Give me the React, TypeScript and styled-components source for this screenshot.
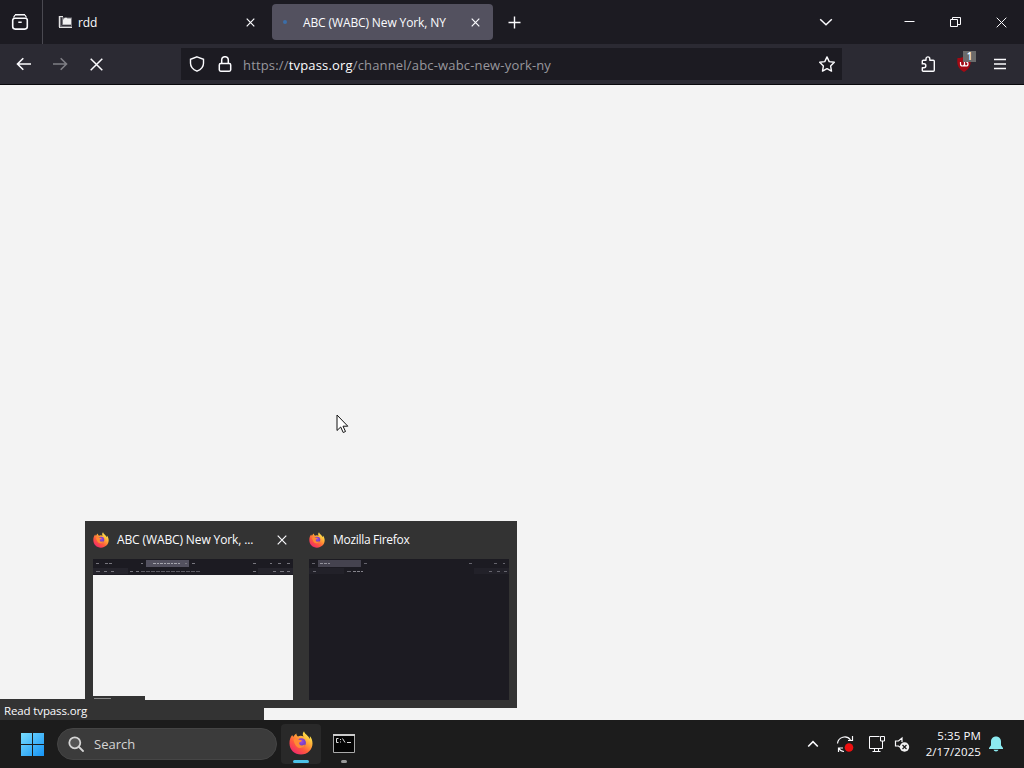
import React from 'react';
import styled, { createGlobalStyle } from 'styled-components';

const FirefoxLogo: React.FC<{ size: number; id: string }> = ({ size, id }) => (
  <Icon $size={size} viewBox="0 0 24 24">
    <defs>
      <linearGradient id={`${id}-body`} x1="0.85" y1="0.1" x2="0.2" y2="0.95">
        <stop offset="0" stopColor="#fff04f" />
        <stop offset="0.35" stopColor="#ffa436" />
        <stop offset="0.65" stopColor="#ff5a3c" />
        <stop offset="1" stopColor="#f0286c" />
      </linearGradient>
      <radialGradient id={`${id}-globe`} cx="0.5" cy="0.35" r="0.65">
        <stop offset="0" stopColor="#a24de0" />
        <stop offset="1" stopColor="#6038b8" />
      </radialGradient>
    </defs>
    <path
      fill={`url(#${id}-body)`}
      stroke="none"
      d="M15 .3c-1.600 1.800-1.500 3.800-.5 5.200C12.800 4.700 11 4.400 9 5.600 7.900 4.900 7.300 3.600 7.400 2.400 5.900 3.200 5 4.500 4.500 5.700 3.800 5.400 3.400 4.800 3.200 3.900 1.400 6 .4 9 .5 12.500.6 19 5.500 23.500 12 23.500S23.500 18.700 23.500 12.500c0-3-1-5.700-2.700-7.400.2 1 .2 2-.1 2.800C19.700 4.600 16 3.700 15 .3z"
    />
    <circle cx="12.300" cy="11.800" r="4.600" fill={`url(#${id}-globe)`} stroke="none" />
    <path
      fill="#ff8a35"
      stroke="none"
      d="M4.500 8.500c2.400-1.400 4.300-1 5.500.2 1.200.2 2.500.3 3 .8-.3 1.200-2 1.500-2.800 2.100-.4 2 1.200 3.100 3 2.800 1.300-.2 2-1 3-.6-1 2.400-3.300 3.500-5.600 3.200C7 16.500 5.500 13 4.500 8.500z"
    />
  </Icon>
);

const CloseIcon: React.FC<{ size: number; width?: number }> = ({ size, width = 1.2 }) => (
  <Icon $size={size} viewBox={`0 0 ${size} ${size}`} strokeWidth={width}>
    <path d={`M.7.7L${size - 0.7} ${size - 0.7}M${size - 0.7}.7L.7 ${size - 0.7}`} />
  </Icon>
);

const TabStrip: React.FC = () => (
  <TabBar>
    <ViewButton>
      <Icon $size={18} viewBox="0 0 18 18" strokeWidth="1.6">
        <path d="M4 1.800h10M3.700 5.300h10.600a2 2 0 0 1 2 2v6.300a2.500 2.500 0 0 1-2.500 2.500H4.200a2.500 2.500 0 0 1-2.500-2.500V7.300a2 2 0 0 1 2-2zM7.300 9.300h3.400" />
        <path d="M2.500 4.500L4 2M15.500 4.500L14 2" strokeWidth="1.200" />
      </Icon>
    </ViewButton>
    <Tab>
      <Icon $size={14} viewBox="0 0 14 14">
        <path fill="#77767c" stroke="none" d="M.5 1H5v1.500h9V12H.5z" />
        <path fill="#f2f2f2" stroke="none" d="M6 3.500l2-1 1.500 1H13v6H5V5z" />
        <path stroke="#e2e2e2" d="M1 1.500h4M1.500 1v12M1 12.500h13" />
        <path stroke="#34333b" d="M3.500 2.500v8M4 10.500h9" />
      </Icon>
      <TabLabel>rdd</TabLabel>
      <CloseIcon size={9} />
    </Tab>
    <Tab $active>
      <Spinner />
      <TabLabel>ABC (WABC) New York, NY</TabLabel>
      <CloseIcon size={9} />
    </Tab>
    <NewTab>
      <Icon $size={13} viewBox="0 0 13 13" strokeWidth="1.4">
        <path d="M6.500.5v12M.5 6.500h12" />
      </Icon>
    </NewTab>
    <Spacer />
    <BarButton $width={36}>
      <Icon $size={14} viewBox="0 0 14 14" strokeWidth="1.5">
        <path d="M1.200 4.200L7 9.700l5.800-5.500" />
      </Icon>
    </BarButton>
    <WindowControls>
      <BarButton $width={46}>
        <Icon $size={11} viewBox="0 0 11 11">
          <path d="M.5 4.500h10" />
        </Icon>
      </BarButton>
      <BarButton $width={46}>
        <Icon $size={11} viewBox="0 0 11 11">
          <path d="M.5 2.500h7v7h-7zM2.500 2V.5h8v7H8" />
        </Icon>
      </BarButton>
      <BarButton $width={46}>
        <CloseIcon size={11} width={1} />
      </BarButton>
    </WindowControls>
  </TabBar>
);

const NavToolbar: React.FC = () => (
  <NavBar>
    <BarButton $width={36}>
      <Icon $size={16} viewBox="0 0 16 16" strokeWidth="1.6">
        <path d="M15 8H1.500M7.300 2.200L1.500 8l5.800 5.800" />
      </Icon>
    </BarButton>
    <BarButton $width={36} $dim>
      <Icon $size={16} viewBox="0 0 16 16" strokeWidth="1.6">
        <path d="M1 8h13.500M8.700 2.200L14.500 8l-5.800 5.800" />
      </Icon>
    </BarButton>
    <BarButton $width={36}>
      <CloseIcon size={13} width={1.5} />
    </BarButton>
    <UrlBar>
      <Icon $size={16} viewBox="0 0 16 16" strokeWidth="1.4">
        <path d="M8 .8l6.500 2.500v3.900c0 3.500-2.500 6.300-6.500 8-4-1.700-6.500-4.500-6.500-8V3.300z" />
      </Icon>
      <Icon $size={16} viewBox="0 0 16 16" strokeWidth="1.5">
        <rect x="2.300" y="7.500" width="11.400" height="7.700" rx="1.400" />
        <path d="M4.700 7.500V4a3.300 3.300 0 0 1 6.600 0v3.500" />
      </Icon>
      <Url>
        https://<b>tvpass.org</b>/channel/abc-wabc-new-york-ny
      </Url>
      <Icon $size={16} viewBox="0 0 16 16" strokeWidth="1.4">
        <path
          strokeLinejoin="round"
          d="M8 .9l2.200 4.700 5.100.7-3.700 3.600.9 5.200L8 12.600l-4.500 2.500.9-5.200L.7 6.300l5.100-.7z"
        />
      </Icon>
    </UrlBar>
    <Spacer />
    <BarButton $width={36}>
      <Icon $size={16} viewBox="0 0 16 16" strokeWidth="1.4">
        <path
          strokeLinejoin="round"
          d="M2.300 7.500V5.300q0-1 1-1H6V2.800a1.900 1.900 0 0 1 3.800 0v1.500h3.500q1 0 1 1v9q0 1-1 1h-10q-1 0-1-1v-2.600h1.600a1.900 1.900 0 0 0 0-3.900H1.600"
        />
      </Icon>
    </BarButton>
    <BarButton $width={36}>
      <Extension>
        <Icon $size={16} viewBox="0 0 16 16">
          <path fill="#a30a14" stroke="none" d="M8 0c2 2 5 2 6.500 2 1 7-1 11-6.500 14C2.500 13 .5 9 1.500 2 4 2 6 2 8 0z" />
          <path stroke="#fff" strokeWidth="1.2" d="M4.500 6v2q0 2 2 2t2-2V6M8.500 8q0 2 1.500 2 2 0 2-2T10 6" />
        </Icon>
        <Badge>1</Badge>
      </Extension>
    </BarButton>
    <BarButton $width={36}>
      <Icon $size={14} viewBox="0 0 14 14" strokeWidth="1.4">
        <path d="M1 2.500h12M1 7h12M1 11.500h12" />
      </Icon>
    </BarButton>
  </NavBar>
);

const TaskPreviews: React.FC = () => (
  <PreviewPanel>
    <Preview>
      <PreviewTitle>
        <FirefoxLogo size={16} id="preview-page" />
        <PreviewLabel>ABC (WABC) New York, ...</PreviewLabel>
        <CloseIcon size={10} />
      </PreviewTitle>
      <Thumbnail>
        <MiniChrome viewBox="0 0 200 16">
          <path fill="#25242c" stroke="none" d="M0 9h35v6H0zM165 9h35v6h-35z" />
          <path fill="#53515f" stroke="none" d="M53 1h43v7H53z" />
          <path stroke="#a5a5ad" strokeDasharray="3 1 2 1" d="M60 4.500h27" />
          <path stroke="#77767e" d="M3 4.500h3M12 4.500h3M16 4.500h3M48 4.500h2M92 4.500h2M99 4.500h3M160 4.500h3M177 4.500h2M185 4.500h3M194 4.500h3" />
          <path stroke="#77767e" d="M3 12.500h4M11 12.500h3M18 12.500h3M37 12.500h3M43 12.500h3M160 12.500h3M180 12.500h3M187 12.500h4M194 12.500h3" />
          <path stroke="#5c5b64" strokeDasharray="4 1" d="M48 12.500h59" />
        </MiniChrome>
        <MiniPage>
          <MiniStatus />
        </MiniPage>
      </Thumbnail>
    </Preview>
    <Preview>
      <PreviewTitle>
        <FirefoxLogo size={16} id="preview-blank" />
        <PreviewLabel $tight>Mozilla Firefox</PreviewLabel>
      </PreviewTitle>
      <Thumbnail>
        <MiniChrome viewBox="0 0 200 16">
          <path fill="#222129" stroke="none" d="M0 9h35v6H0zM165 9h35v6h-35z" />
          <path fill="#45434f" stroke="none" d="M9 1h43v7H9z" />
          <path stroke="#92919a" strokeDasharray="3 1" d="M11 4.500h10" />
          <path stroke="#65646d" d="M3 4.500h3M55 4.500h3M160 4.500h3M185 4.500h3M194 4.500h2M4 12.500h3M38 12.500h4M180 12.500h3M188 12.500h3M195 12.500h3" />
          <path stroke="#85848c" strokeDasharray="3 1" d="M44 12.500h10" />
        </MiniChrome>
      </Thumbnail>
    </Preview>
  </PreviewPanel>
);

const Taskbar: React.FC = () => (
  <TaskbarRow>
    <StartButton>
      <Icon $size={24} viewBox="0 0 24 24">
        <defs>
          <linearGradient id="start" x1="0" y1="0" x2="24" y2="24" gradientUnits="userSpaceOnUse">
            <stop offset="0" stopColor="#7ce0ff" />
            <stop offset="1" stopColor="#1593f5" />
          </linearGradient>
        </defs>
        <path fill="url(#start)" stroke="none" d="M1 1h11v11H1zM13 1h11v11H13zM1 13h11v11H1zM13 13h11v11H13z" />
      </Icon>
    </StartButton>
    <SearchBox>
      <Icon $size={16} viewBox="0 0 16 16" strokeWidth="1.8">
        <circle cx="6.800" cy="6.800" r="5.500" fill="#555" />
        <path d="M11 11l4 4" strokeLinecap="round" />
      </Icon>
      <span>Search</span>
    </SearchBox>
    <AppButton $active>
      <FirefoxLogo size={24} id="taskbar" />
      <Indicator $active />
    </AppButton>
    <AppButton>
      <Icon $size={24} viewBox="0 0 24 24">
        <path fill="#050505" stroke="#aaa" d="M1.500 3.500h21v18h-21z" />
        <path stroke="#ccc" strokeWidth="2" d="M1 4h22" />
        <path stroke="#ddd" d="M6.500 7.500h-2v4h2M8.500 8v1M8.500 10.500v1M10.500 7.500l2.500 4M15 11.500h4" />
      </Icon>
      <Indicator />
    </AppButton>
    <Spacer />
    <Tray>
      <Icon $size={12} viewBox="0 0 12 12" strokeWidth="1.6">
        <path d="M1.200 8.500L6 3.700l4.800 4.800" />
      </Icon>
      <Icon $size={18} viewBox="0 0 18 18" strokeWidth="1.2">
        <path d="M1.500 8.500a7.200 7.200 0 0 1 13-3.500M16.500 1v4.500H12M2.500 17v-4h4.500M3 13.500c1 1.800 3 3 5 3" />
        <circle cx="13" cy="12.500" r="4.300" fill="#ed1010" stroke="none" />
      </Icon>
      <Icon $size={18} viewBox="0 0 18 18">
        <path d="M11.500 1.500h-10v12h13V8M6.500 13.500v3M10.500 13.500v3M4.500 16.500h8M12.500 1.500h4v4.500h-4zM14.500 6v2.500" />
      </Icon>
      <Icon $size={16} viewBox="0 0 16 16" strokeWidth="1.2">
        <path d="M8 6V2L4.500 5H1.500v5h3l1.500 1.200" />
        <circle cx="10.500" cy="11" r="4.700" fill="#f2f2f2" stroke="none" />
        <path stroke="#1c1c1c" d="M8.500 9l4 4M12.500 9l-4 4" />
      </Icon>
      <Clock>
        <span>5:35 PM</span>
        <span>2/17/2025</span>
      </Clock>
      <Icon $size={16} viewBox="0 0 16 16">
        <path
          fill="#8ceaf0"
          stroke="none"
          d="M8 .5c-3 0-5 2.200-5 5v3.700L1 12v1h14v-1L13 9.200V5.500c0-2.800-2-5-5-5zM5.500 13.800a2.600 2.200 0 0 0 5 0z"
        />
      </Icon>
    </Tray>
  </TaskbarRow>
);

const App: React.FC = () => (
  <Desktop>
    <GlobalStyle />
    <TabStrip />
    <NavToolbar />
    <Page>
      <StatusText>Read tvpass.org</StatusText>
      <TaskPreviews />
      <Cursor viewBox="0 0 13 20">
        <path
          d="M1 1v15.500l3.700-3.500 2.500 5.500 2.300-1-2.500-5.300h4.800z"
          fill="#fff"
          stroke="#111"
          strokeWidth="1"
        />
      </Cursor>
    </Page>
    <Taskbar />
  </Desktop>
);

export default App;

const GlobalStyle = createGlobalStyle`
  * {
    box-sizing: border-box;
  }

  body {
    margin: 0;
    overflow: hidden;
    font-family: 'Open Sans', 'Noto Sans', sans-serif;
    font-size: 12px;
  }
`;

const Desktop = styled.div`
  display: flex;
  flex-direction: column;
  width: 1024px;
  height: 768px;
  color: #fbfbfe;
`;

const Icon = styled.svg<{ $size: number }>`
  display: block;
  flex: none;
  width: ${({ $size }) => $size}px;
  height: ${({ $size }) => $size}px;
  fill: none;
  stroke: currentColor;
`;

const Spacer = styled.div`
  flex: 1;
`;

const TabBar = styled.div`
  display: flex;
  align-items: center;
  height: 44px;
  background-color: #1c1b22;
`;

const ViewButton = styled.div`
  display: flex;
  align-items: center;
  width: 43px;
  height: 44px;
  padding-left: 11px;
  border-right: 1px solid #4a4951;
  margin-right: 4px;
`;

const Tab = styled.div<{ $active?: boolean }>`
  display: flex;
  align-items: center;
  width: 221px;
  height: 36px;
  padding: 0 13px 0 11px;
  margin-right: 4px;
  border-radius: 4px;
  background-color: ${({ $active }) => ($active ? '#53515f' : 'transparent')};
`;

const TabLabel = styled.span`
  flex: 1;
  margin-left: 6px;
  white-space: nowrap;
  letter-spacing: -0.12px;
`;

const Spinner = styled.div`
  width: 4px;
  height: 4px;
  margin-right: 10px;
  border-radius: 50%;
  background-color: #3b6ea8;
`;

const NewTab = styled.div`
  display: flex;
  padding-left: 11px;
`;

const WindowControls = styled.div`
  display: flex;
  margin-left: 42px;
`;

const BarButton = styled.div<{ $width: number; $dim?: boolean }>`
  display: flex;
  align-items: center;
  justify-content: center;
  width: ${({ $width }) => $width}px;
  height: 36px;
  opacity: ${({ $dim }) => ($dim ? 0.4 : 1)};
`;

const NavBar = styled.div`
  display: flex;
  align-items: center;
  height: 41px;
  padding: 0 6px;
  border-bottom: 1px solid #08080b;
  background-color: #2b2a33;
`;

const UrlBar = styled.div`
  display: flex;
  align-items: center;
  gap: 12px;
  width: 661px;
  height: 32px;
  margin-left: 67px;
  padding: 0 7px 0 8px;
  background-color: #1c1b22;
`;

const Url = styled.span`
  flex: 1;
  margin-left: -2px;
  padding-top: 2px;
  font-size: 13px;
  letter-spacing: 0.17px;
  color: #98979d;

  b {
    font-weight: 400;
    color: #fbfbfe;
  }
`;

const Extension = styled.div`
  position: relative;
`;

const Badge = styled.span`
  position: absolute;
  top: -5px;
  right: -4px;
  width: 13px;
  height: 11px;
  font-size: 10px;
  font-weight: 600;
  line-height: 11px;
  text-align: center;
  background-color: #6b6b6b;
`;

const Page = styled.div`
  position: relative;
  height: 635px;
  background-color: #f3f3f3;
`;

const StatusText = styled.div`
  position: absolute;
  left: 0;
  bottom: 0;
  width: 264px;
  height: 21px;
  padding-left: 4px;
  font-size: 11.5px;
  line-height: 24px;
  letter-spacing: -0.13px;
  background-color: #333;
`;

const PreviewPanel = styled.div`
  position: absolute;
  left: 85px;
  bottom: 12px;
  display: flex;
  width: 432px;
  height: 187px;
  background-color: #333;
`;

const Preview = styled.div`
  width: 216px;
  padding: 0 8px;
`;

const PreviewTitle = styled.div`
  display: flex;
  align-items: center;
  height: 38px;
  padding-right: 6px;
`;

const PreviewLabel = styled.span<{ $tight?: boolean }>`
  flex: 1;
  margin-left: 8px;
  padding-bottom: 1px;
  white-space: nowrap;
  letter-spacing: ${({ $tight }) => ($tight ? '-0.3px' : '-0.12px')};
`;

const Thumbnail = styled.div`
  display: flex;
  flex-direction: column;
  width: 200px;
  height: 141px;
  background-color: #1c1b22;
`;

const MiniChrome = styled.svg`
  display: block;
  flex: none;
  width: 200px;
  height: 16px;
  fill: none;
`;

const MiniPage = styled.div`
  display: flex;
  flex: 1;
  align-items: flex-end;
  background-color: #f3f3f3;
`;

const MiniStatus = styled.div`
  width: 52px;
  height: 4px;
  padding: 2px 34px 0 1px;
  background-color: #333;

  &::before {
    content: '';
    display: block;
    height: 1px;
    background-color: #888;
  }
`;

const Cursor = styled.svg`
  position: absolute;
  left: 336px;
  top: 329px;
  width: 13px;
  height: 20px;
`;

const TaskbarRow = styled.div`
  display: flex;
  align-items: center;
  height: 48px;
  padding: 0 20px;
  background-color: #1c1c1c;
`;

const StartButton = styled.div`
  width: 37px;
`;

const SearchBox = styled.div`
  display: flex;
  align-items: center;
  gap: 10px;
  width: 220px;
  height: 32px;
  padding-left: 10px;
  margin-right: 4px;
  border: 1px solid #454545;
  border-radius: 16px;
  font-size: 13px;
  color: #d5d5d5;
  background-color: #3b3b3b;
`;

const AppButton = styled.div<{ $active?: boolean }>`
  display: flex;
  flex-direction: column;
  align-items: center;
  justify-content: space-between;
  width: 40px;
  height: 40px;
  padding: 7px 0 1px;
  margin-right: 3px;
  border-radius: 4px;
  background-color: ${({ $active }) => ($active ? '#292929' : 'transparent')};
`;

const Indicator = styled.div<{ $active?: boolean }>`
  width: ${({ $active }) => ($active ? 16 : 6)}px;
  height: 3px;
  border-radius: 2px;
  background-color: ${({ $active }) => ($active ? '#4cc2e8' : '#9a9a9a')};
`;

const Tray = styled.div`
  display: flex;
  align-items: center;

  > svg:nth-child(2) {
    margin-left: 17px;
  }

  > svg:nth-child(3) {
    margin-left: 14px;
  }

  > svg:nth-child(4) {
    margin-left: 8px;
  }
`;

const Clock = styled.div`
  display: flex;
  flex-direction: column;
  align-items: flex-end;
  width: 71px;
  margin-right: 7px;
  font-size: 11.5px;
  line-height: 16px;
  letter-spacing: 0.1px;
`;
